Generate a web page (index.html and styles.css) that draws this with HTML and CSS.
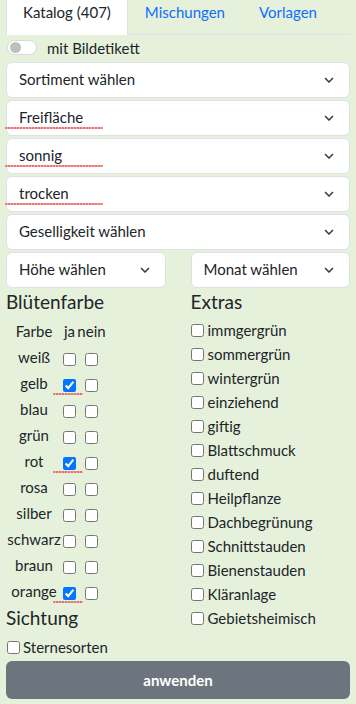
FILE: index.html
```html
<!DOCTYPE html>
<html lang="de">
<head>
  <meta charset="UTF-8" />
  <title>Stauden Katalog</title>
  <link rel="stylesheet" href="styles.css">
</head>
<body>
  <ul class="tabs">
    <li class="tab active">Katalog (407)</li>
    <li class="tab">Mischungen</li>
    <li class="tab">Vorlagen</li>
  </ul>

  <label class="switch-row">
    <span class="switch"><span class="knob"></span></span>
    mit Bildetikett
  </label>

  <div class="select">Sortiment wählen <svg width="10" height="6" viewBox="0 0 10 6"><path d="M1 1l4 4 4-4" /></svg></div>
  <div class="select changed">Freifläche <svg width="10" height="6" viewBox="0 0 10 6"><path d="M1 1l4 4 4-4" /></svg></div>
  <div class="select changed">sonnig <svg width="10" height="6" viewBox="0 0 10 6"><path d="M1 1l4 4 4-4" /></svg></div>
  <div class="select changed">trocken <svg width="10" height="6" viewBox="0 0 10 6"><path d="M1 1l4 4 4-4" /></svg></div>
  <div class="select">Geselligkeit wählen <svg width="10" height="6" viewBox="0 0 10 6"><path d="M1 1l4 4 4-4" /></svg></div>

  <div class="cols">
    <div class="select">Höhe wählen <svg width="10" height="6" viewBox="0 0 10 6"><path d="M1 1l4 4 4-4" /></svg></div>
    <div class="select">Monat wählen <svg width="10" height="6" viewBox="0 0 10 6"><path d="M1 1l4 4 4-4" /></svg></div>
  </div>

  <div class="cols">
    <div>
      <h4>Blütenfarbe</h4>
      <table class="farben">
        <tr><td>Farbe</td><td>ja</td><td>nein</td></tr>
        <tr><td>weiß</td><td><input type="checkbox"></td><td><input type="checkbox"></td></tr>
        <tr><td>gelb</td><td><span class="mark"><input type="checkbox" checked></span></td><td><input type="checkbox"></td></tr>
        <tr><td>blau</td><td><input type="checkbox"></td><td><input type="checkbox"></td></tr>
        <tr><td>grün</td><td><input type="checkbox"></td><td><input type="checkbox"></td></tr>
        <tr><td>rot</td><td><span class="mark"><input type="checkbox" checked></span></td><td><input type="checkbox"></td></tr>
        <tr><td>rosa</td><td><input type="checkbox"></td><td><input type="checkbox"></td></tr>
        <tr><td>silber</td><td><input type="checkbox"></td><td><input type="checkbox"></td></tr>
        <tr><td>schwarz</td><td><input type="checkbox"></td><td><input type="checkbox"></td></tr>
        <tr><td>braun</td><td><input type="checkbox"></td><td><input type="checkbox"></td></tr>
        <tr><td>orange</td><td><span class="mark"><input type="checkbox" checked></span></td><td><input type="checkbox"></td></tr>
      </table>

      <h4 class="sichtung">Sichtung</h4>
      <label class="check stern"><input type="checkbox">Sternesorten</label>
    </div>

    <div>
      <h4>Extras</h4>
      <label class="check"><input type="checkbox">immgergrün</label>
      <label class="check"><input type="checkbox">sommergrün</label>
      <label class="check"><input type="checkbox">wintergrün</label>
      <label class="check"><input type="checkbox">einziehend</label>
      <label class="check"><input type="checkbox">giftig</label>
      <label class="check"><input type="checkbox">Blattschmuck</label>
      <label class="check"><input type="checkbox">duftend</label>
      <label class="check"><input type="checkbox">Heilpflanze</label>
      <label class="check"><input type="checkbox">Dachbegrünung</label>
      <label class="check"><input type="checkbox">Schnittstauden</label>
      <label class="check"><input type="checkbox">Bienenstauden</label>
      <label class="check"><input type="checkbox">Kläranlage</label>
      <label class="check"><input type="checkbox">Gebietsheimisch</label>
    </div>
  </div>

  <button class="apply">anwenden</button>
</body>
</html>
```

FILE: styles.css
```css
body {
  margin: 0;
  padding: 0 6px;
  background: #e6f1dc;
  font-family: Lato, "Noto Sans", sans-serif;
  font-size: 15px;
  line-height: 24px;
  color: #212529;
}
.tabs {
  display: flex;
  margin: 0;
  padding: 0;
  list-style: none;
  border-bottom: 1px solid #dee2e6;
}
.tab {
  padding: 0 16px 10px;
  border: 1px solid transparent;
  border-top: none;
  margin-bottom: -1px;
  color: #0d6efd;
}
.tab.active {
  background: #fff;
  color: #212529;
  border-color: #dee2e6;
  border-bottom-color: #fff;
}
.switch-row {
  display: flex;
  align-items: center;
  height: 25px;
  margin-bottom: 2px;
}
.switch {
  display: inline-flex;
  align-items: center;
  width: 28px;
  height: 13px;
  margin: 0 10px 0 1px;
  background: #fff;
  border: 1px solid #d6dbd8;
  border-radius: 8px;
}
.knob {
  width: 11px;
  height: 11px;
  margin-left: 2px;
  border-radius: 50%;
  background: #bfbfbf;
}
.select {
  position: relative;
  display: flex;
  align-items: center;
  justify-content: space-between;
  height: 32px;
  padding: 0 15px 2px 12px;
  margin-bottom: 2px;
  background: #fff;
  border: 1px solid #dee2e6;
  border-radius: 6px;
}
.select svg {
  margin-top: 2px;
}
.select svg path {
  fill: none;
  stroke: #343a40;
  stroke-width: 1.5;
}
.changed::after,
.mark::after {
  content: "";
  position: absolute;
  height: 2px;
  border-radius: 1px;
  background: repeating-linear-gradient(90deg, #e8585a 0 2px, #f2a3a3 2px 3px);
  opacity: 0.85;
}
.changed::after {
  left: -2px;
  top: 26px;
  width: 98px;
}
.cols {
  display: grid;
  grid-template-columns: 1fr 1fr;
  column-gap: 25px;
}
h4 {
  margin: 0 0 4px;
  font-size: 19px;
  font-weight: 400;
  line-height: 24px;
}
.farben {
  border-collapse: collapse;
  margin-top: 2px;
}
.farben td {
  padding: 0;
  height: 26px;
  text-align: center;
}
.farben td:nth-child(1) { width: 56px; }
.farben td:nth-child(2) { width: 15px; }
.farben td:nth-child(3) { width: 29px; }
.farben input {
  margin: 0;
  vertical-align: middle;
}
.mark {
  position: relative;
  display: inline-block;
  line-height: 0;
}
.mark::after {
  left: -10px;
  top: 14px;
  width: 30px;
}
.sichtung {
  margin-top: 2px;
}
.check {
  display: flex;
  align-items: center;
  height: 24px;
}
.check input {
  margin: 0 4px 0 0;
}
.stern {
  margin-top: 5px;
}
.stern input {
  margin: 0 3px 0 1px;
}
.apply {
  display: block;
  width: 100%;
  height: 38px;
  margin-top: 2px;
  background: #6c757d;
  color: #fff;
  border: none;
  border-radius: 6px;
  font-family: Lato, "Noto Sans", sans-serif;
  font-size: 15px;
  font-weight: 700;
}
```
